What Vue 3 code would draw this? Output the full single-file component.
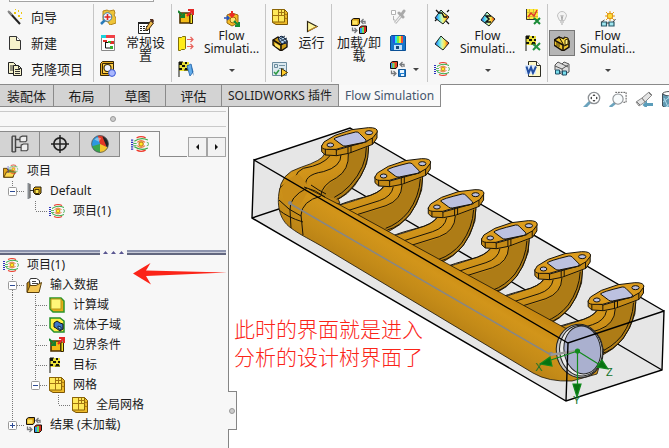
<script setup>
import { ref } from 'vue'

const projectActions = [
  { icon: 'wand', label: '向导' },
  { icon: 'page', label: '新建' },
  { icon: 'clone', label: '克隆项目' },
]

const groups = [
  [
    { kind: 'stack', items: [{ icon: 'inspect', label: '检查几何体' }, { icon: 'treeview', label: '项目树' }, { icon: 'units', label: '单位' }] },
    { kind: 'big', size: 'medium', icon: 'settings', text: '常规设\n置' },
  ],
  [
    { kind: 'stack', items: [{ icon: 'boundary', label: '边界条件' }, { icon: 'fan', label: '风扇' }, { icon: 'goalblue', label: '目标' }] },
    { kind: 'big', size: 'wide', icon: 'features', text: 'Flow\nSimulati...', menu: true },
  ],
  [
    { kind: 'stack', items: [{ icon: 'mesh', label: '网格' }, { icon: 'solid', label: '求解' }, { icon: 'batch', label: '批处理' }] },
    { kind: 'big', size: 'narrow', icon: 'play', text: '运行' },
  ],
  [
    { kind: 'big', size: 'large', icon: 'load', text: '加载/卸\n载' },
    { kind: 'stack', items: [{ icon: 'probe', label: '探测' }, { icon: 'save', label: '保存' }, { icon: 'loadsave', label: '加载时间', menu: true }] },
  ],
  [
    { kind: 'stack', items: [{ icon: 'cutplot', label: '切面图' }, { icon: 'surfplot', label: '表面图' }, { icon: 'flow', label: '流动迹线' }] },
    { kind: 'big', size: 'wide', icon: 'sigma', text: 'Flow\nSimulati...', menu: true },
    { kind: 'stack', items: [{ icon: 'chart', label: 'XY 图' }, { icon: 'goalxls', label: '目标图' }, { icon: 'word', label: '报告' }] },
  ],
  [
    { kind: 'stack', items: [{ icon: 'bulb', label: '照明' }, { icon: 'solidy', label: '显示几何体', on: true }, { icon: 'glasses', label: '透明度' }] },
    { kind: 'big', size: 'wide', icon: 'sunglasses', text: 'Flow\nSimulati...', menu: true },
  ],
]

const tabs = ['装配体', '布局', '草图', '评估', 'SOLIDWORKS 插件', 'Flow Simulation']
const activeTab = ref(5)

const panes = [
  { icon: 'feature', label: '特征树' },
  { icon: 'target', label: '尺寸' },
  { icon: 'ball', label: '外观' },
  { icon: 'flow', label: '流动分析' },
]
const activePane = ref(3)

const projectTree = [
  { cells: [], icon: 'flowfolder', label: '项目' },
  { cells: ['minus-top'], icon: 'config', label: 'Default' },
  { cells: ['blank', 'end'], icon: 'flow', label: '项目(1)' },
]
const analysisTree = [
  { cells: [], icon: 'flow', label: '项目(1)' },
  { cells: ['minus-both'], icon: 'folder', label: '输入数据' },
  { cells: ['line', 'tee'], icon: 'domain', label: '计算域' },
  { cells: ['line', 'tee'], icon: 'fluid', label: '流体子域' },
  { cells: ['line', 'tee'], icon: 'boundary', label: '边界条件' },
  { cells: ['line', 'tee'], icon: 'flag', label: '目标' },
  { cells: ['line', 'minus-top'], icon: 'mesh', label: '网格' },
  { cells: ['line', 'blank', 'end'], icon: 'mesh', label: '全局网格' },
  { cells: ['plus-top'], icon: 'load', label: '结果 (未加载)' },
]
const trees = [projectTree, analysisTree]

const viewTools = [
  { icon: 'zoomfit', label: '整屏显示' },
  { icon: 'zoomarea', label: '局部放大' },
  { icon: 'previous', label: '上一视图' },
  { icon: 'section', label: '剖面视图' },
]

const guidePath = {
  blank: '',
  line: 'M11.5 0V20',
  tee: 'M11.5 0V20M12 10.5H23',
  end: 'M11.5 0V10M12 10.5H23',
  'minus-top': 'M11.5 0V6M16 10.5H23',
  'minus-both': 'M11.5 0V6M11.5 15V20M16 10.5H23',
  'plus-top': 'M11.5 0V6M16 10.5H23',
}
const branches = [1, 2, 3, 4, 5]
</script>

<template>
  <svg class="sprite" aria-hidden="true">
    <defs>
      <linearGradient id="rainbow" x1="0" x2="1"><stop offset="0" stop-color="#2a48f0" /><stop offset=".28" stop-color="#4fdcf2" /><stop offset=".5" stop-color="#d4f7b4" /><stop offset=".7" stop-color="#ffe33d" /><stop offset="1" stop-color="#e2231a" /></linearGradient>
      <linearGradient id="pipe" gradientUnits="userSpaceOnUse" x1="440" y1="252" x2="405" y2="310"><stop offset="0" stop-color="#c4850f" /><stop offset=".3" stop-color="#d2951a" /><stop offset=".65" stop-color="#c48b18" /><stop offset="1" stop-color="#b27c14" /></linearGradient>
      <linearGradient id="elbow" x1="0" y1="0" x2=".4" y2="1"><stop offset="0" stop-color="#bd8216" /><stop offset=".45" stop-color="#d2951a" /><stop offset="1" stop-color="#ba8012" /></linearGradient>
    </defs>
    <symbol id="wand" viewBox="0 0 16 16"><path d="M2 3l11 12" stroke="#222" stroke-width="2" /><path d="M1 2l4 4" stroke="#888" stroke-width="2" /><path d="M7 3h2v2H7zM11 1h1v2h-1zM11 6h2v2h-2zM14 3h1v2h-1zM13 9h2v1h-2zM8 0h1v1H8z" fill="#edc811" /></symbol>
    <symbol id="page" viewBox="0 0 16 16"><path d="M2.500 1.500H9.500L13.500 5.500V14.500H2.500z" fill="#f6f2cb" stroke="#333" /><path d="M9.500 1.500V5.500H13.500" fill="#fff" stroke="#333" /></symbol>
    <symbol id="clone" viewBox="0 0 16 16"><path d="M1.500 1.500H6.500L9.500 4.500V12.500H1.500z" fill="#f6f2cb" stroke="#222" /><path d="M3 5h4M3 7h4M3 9h3" stroke="#333" /><path d="M6.500 4.500H11.500L14.500 7.500V14.500H6.500z" fill="#f6f2cb" stroke="#222" /><path d="M8 8.500h5M8 10.500h5M8 12.500h5M11.500 4.500v3h3" fill="none" stroke="#333" /></symbol>
    <symbol id="inspect" viewBox="0 0 16 16"><path d="M3 2l4-1 2 1 5-1 1 3-1 2 2 3v5l-6 2-2-3-5-2z" fill="#eec438" stroke="#b4851a" /><path d="M1 15l4-4" stroke="#287bbb" stroke-width="2.500" /><circle cx="7.500" cy="8" r="4.300" fill="#e9f5ff" stroke="#457ba0" /><path d="M7.500 5v6M4.500 8h6" stroke="#e32620" stroke-width="1.600" /></symbol>
    <symbol id="treeview" viewBox="0 0 16 16"><path d="M1.500 .5h13v15h-13z" fill="#fff" stroke="#888" /><path d="M1 0h14v3H1z" fill="#f13f45" /><path d="M1 0h5v3H1z" fill="#1bd2dc" /><path d="M5.500 6V13H11M5.500 7.500H8" fill="none" stroke="#111" /><path d="M3 5h4v2H3zM10 6h4v3h-4z" fill="#df302a" /><path d="M8 6h3v2H8zM10 11h3v3h-3z" fill="#36ae33" /></symbol>
    <symbol id="units" viewBox="0 0 16 16"><path d="M.5 2.500l2-2H13.500V12.500l-2 2H.5z" fill="#e6ac21" stroke="#352506" /><path d="M2.500 2.500h11v10h-11z" fill="#ffcf49" stroke="#352506" /><circle cx="7.500" cy="7" r="3.500" fill="#edf2ff" stroke="#463606" stroke-width="1.200" /><circle cx="12" cy="12" r="3.400" fill="#a9b7ff" stroke="#3b58d4" /></symbol>
    <symbol id="settings" viewBox="0 0 16 16"><path d="M.5 4.500h11v11h-11z" fill="#fff" stroke="#222" /><path d="M0 5h12" stroke="#222" stroke-width="2" /><path d="M2 8.500h8M2 10.500h8M2 12.500h8" stroke="#222" stroke-dasharray="2 1" /><path d="M12.500 3l3 2-5 6.500-3 1 1-3z" fill="#eebb4b" stroke="#402a10" /><path d="M12 1h3l1 2-1 2-3-3z" fill="#542d1c" /></symbol>
    <symbol id="boundary" viewBox="0 0 16 16"><path d="M2 4h10v10H2z" fill="#f2bb18" stroke="#4d3100" stroke-width="1.600" /><path d="M12 5h2.500v9.500H12z" fill="#fae526" stroke="#332300" /><path d="M0 2l6 6M2 8h4V4" fill="none" stroke="#16802d" stroke-width="2" /><path d="M9 7l5-5M10 1h5v5" fill="none" stroke="#e52725" stroke-width="2" /></symbol>
    <symbol id="fan" viewBox="0 0 16 16"><path d="M.5 2.500h3l1-1h3v12l-1 1h-3l-1 1h-2z" fill="#ffec1a" stroke="#817009" /><path d="M9 4.500h6M12.500 2l2.500 2.500L12.500 7M9 11.500h6M12.500 9l2.500 2.500-2.500 2.500" fill="none" stroke="#e8625c" stroke-width="1.200" /></symbol>
    <symbol id="flag" viewBox="0 0 16 16"><path d="M1 1h10v9H1z" fill="#ebe139" /><path d="M1 1h3v3H1zM7 1h2v2H7zM4 4h3v2H4zM9 4h2v2H9zM1 7h3v2H1zM7 7h3v2H7z" fill="#14160c" /><path d="M1 1v15M1 1h4M6 9h5" stroke="#14160c" /></symbol>
    <symbol id="goalblue" viewBox="0 0 16 16"><use href="#flag" /><path d="M9 5l4-2 2 8-3 4z" fill="#62adec" stroke="#3976b7" /><path d="M13 3l1 8 2 4z" fill="#276cae" /></symbol>
    <symbol id="features" viewBox="0 0 16 16"><path d="M3 4l5-2 6 2v8l-6 3-5-3z" fill="#f7bd25" stroke="#98690d" /><circle cx="9" cy="9" r="3" fill="#fce873" stroke="#9a6610" /><path d="M8 0v5M5.500 3L8 5.500 10.500 3" fill="none" stroke="#ed2b25" stroke-width="2" /><path d="M0 7h5M3 5l2 2-2 2" fill="none" stroke="#2451bd" stroke-width="1.500" /><path d="M10 10l5 5M11 15h4v-4" fill="none" stroke="#168d34" stroke-width="2" /></symbol>
    <symbol id="mesh" viewBox="0 0 16 16"><path d="M.5 .5h12l3 3v12H4l-3.500-2z" fill="#eebb2a" stroke="#7c5504" /><path d="M.5 .5h12v12.500H.5z" fill="#ffe95a" stroke="#8b6505" /><path d="M6.500 1v12M1 6.500h12M9.500 1v6M7 3.500h6M12.500 5l3 1M12.500 9l3 1" stroke="#a27412" /></symbol>
    <symbol id="solid" viewBox="0 0 16 16"><path d="M1 5l5-3 9 4v6l-6 4-8-6z" fill="#ce9d18" stroke="#171008" stroke-width="1.400" /><path d="M1 5l8 5v6M9 10l6-4" fill="none" stroke="#171008" stroke-width="1.500" /><path d="M6 4l3-3 5 3 1 4-5 1z" fill="#b9d7f6" stroke="#101d42" /><path d="M7 2l7 6M10 1l5 5M6 5l7-4M7 7l8-4M10 9l5-3" stroke="#23364a" /><path d="M3 8l5 3v3l-5-3z" fill="#ffe25d" /></symbol>
    <symbol id="solidy" viewBox="0 0 16 16"><path d="M0 5l5-3 10 4v6l-6 4-9-6z" fill="#ebc22d" stroke="#171008" stroke-width="1.500" /><path d="M0 5l9 5 6-4M9 10v6" fill="none" stroke="#171008" stroke-width="1.500" /><path d="M5 2l5 2V2l4 1 1 6-5 2-2-4z" fill="#ffdd45" stroke="#171008" /><path d="M11 5l3-1v5l-3 1zM3 7v4M5 8v4" fill="#ffef85" stroke="#413003" /></symbol>
    <symbol id="batch" viewBox="0 0 16 16"><path d="M.5 1.500h14v13H.5z" fill="#dce9ef" stroke="#6b8c9e" /><path d="M2.500 3.500h3v3h-3z" fill="none" stroke="#6b8c9e" /><path d="M2 11l2 2 3-4" fill="none" stroke="#2c9a42" stroke-width="1.500" /><path d="M7 4.500h6M7 7.500h5" stroke="#7594a5" /><path d="M9.500 7.500l6 4-6 4z" fill="#ffcc29" stroke="#3d2c08" /></symbol>
    <symbol id="play" viewBox="0 0 16 16"><path d="M3.500 3.500L13 8.500 3.500 13.500z" fill="#fff79e" stroke="#302815" stroke-width="1.200" /><path d="M4 13l9-4.500" stroke="#dc9821" /></symbol>
    <symbol id="load" viewBox="0 0 16 16"><path d="M.5 2L2.500 .5H8.500V5.500L7 7.500H.5z" fill="#d09b12" stroke="#171008" /><path d="M1.500 2.500h5v4h-5z" fill="#ffe663" /><path d="M8.500 9.500L10.500 8H15.500V13.500L13.500 15.500H8.500z" fill="#dd2d1b" stroke="#171008" /><path d="M9 10h2v5H9z" fill="#2d9bf0" /><path d="M11 9h2v6h-2z" fill="#65df69" /><path d="M10 3.500h4V6M12.500 1L10 3.500 12.500 6M5.500 12.500H1.500V9.500M3.500 10L6 12.500 3.500 15" fill="none" stroke="#77797c" stroke-width="1.300" /></symbol>
    <symbol id="probe" viewBox="0 0 16 16"><path d="M1.500 1.500h4v4h-4z" fill="#fff" stroke="#b3b3b3" /><path d="M3.500 7v4H5" fill="none" stroke="#b3b3b3" /><path d="M5 14l6-7" stroke="#c0c0c0" stroke-width="3" /><path d="M9 4l4 4M12 5l2-3" stroke="#aaa" stroke-width="3" stroke-linecap="round" /><path d="M5.500 13.500l5-6" stroke="#fff" /></symbol>
    <symbol id="save" viewBox="0 0 16 16"><path d="M.5 1.500l1-1h13l1 1v14H.5z" fill="#1877cb" stroke="#0a5096" /><path d="M3 1h2v7H3z" fill="#2451ea" /><path d="M5 1h2v7H5z" fill="#28e5ee" /><path d="M7 1h2v7H7z" fill="#75ed48" /><path d="M9 1h2v7H9z" fill="#f2ea31" /><path d="M11 1h2v7h-2z" fill="#f24c37" /><path d="M4 10h8v5H4z" fill="#c4e3fb" /><path d="M6 11h3v3H6z" fill="#164b7c" /></symbol>
    <symbol id="loadsave" viewBox="0 0 16 16"><path d="M.5 2L2.500 .5H7.500V5.500L6 7.500H.5z" fill="#e74825" stroke="#111" /><path d="M1 2h1.500v5H1z" fill="#358ef2" /><path d="M2.500 2h2v5h-2z" fill="#6de264" /><path d="M10 3.500h4V6M12.500 1L10 3.500 12.500 6M5.500 12.500H1.500V9.500M3.500 10L6 12.500 3.500 15" fill="none" stroke="#77797c" stroke-width="1.300" /><path d="M8.500 8.500h7v7h-7z" fill="#247fce" stroke="#155899" /><path d="M10 9h4v3h-4zM11 13h3v2h-3z" fill="#eaf6ff" /></symbol>
    <symbol id="surfplot" viewBox="0 0 16 16"><path d="M1 9l6-8 3 3 5 4-6 7-4-3z" fill="url(#rainbow)" stroke="#17231e" /></symbol>
    <symbol id="cutplot" viewBox="0 0 16 16"><use href="#surfplot" /><path d="M2 1l3 3h3l2 4h3M13 3l2-2M1 12l2-2M12 12l3 3" fill="none" stroke="#111" stroke-width="1.300" /></symbol>
    <symbol id="sigma" viewBox="0 0 16 16"><use href="#surfplot" /><path d="M11 5H6l3 3-3 3h5" fill="none" stroke="#111" stroke-width="1.500" /></symbol>
    <symbol id="flow" viewBox="0 0 16 16"><path d="M5 2.500q4-2 8 0M5 13.500q4 2 8 0" fill="none" stroke="#ee3b2c" stroke-width="1.200" /><path d="M3 5.500q6-4 12-1M3 10.500q6 4 12 1" fill="none" stroke="#3aaa45" /><path d="M5.500 6.500q3.500-3 7 0M5.500 9.500q3.500 3 7 0" fill="none" stroke="#ee7b3c" /><path d="M2 7.500h3M2 9.500h3M14 6.500l2 1M14 9.500l2-1" stroke="#3aaa45" stroke-width=".8" /><path d="M0 4.500h2M0 6.500h2M0 8.500h2M0 10.500h2M0 12.500h2" stroke="#2c30bc" /><circle cx="9" cy="8" r="1.900" fill="#ffed22" stroke="#c9821a" /></symbol>
    <symbol id="chart" viewBox="0 0 16 16"><path d="M1 0h12v11H1z" fill="#ffe93e" /><path d="M4.500 0v11M8.500 0v11M1 3.500h12M1 7.500h12" stroke="#d1bf32" /><path d="M1.500 0v10.500H12" fill="none" stroke="#333" /><path d="M3 8l3-4 3 3 3-6" fill="none" stroke="#e2342a" stroke-width="1.400" /><path d="M9 9l6 6M15 9l-6 6" stroke="#188a35" stroke-width="2" /></symbol>
    <symbol id="goalxls" viewBox="0 0 16 16"><use href="#flag" /><path d="M8 9l7 6M15 8l-7 7" stroke="#259241" stroke-width="2" /></symbol>
    <symbol id="word" viewBox="0 0 16 16"><path d="M3.500 .5h8l4 4v11h-12z" fill="#fff9c8" stroke="#2d2d24" /><path d="M11.500 .5v4h4" fill="#fff" stroke="#2d2d24" /><path d="M0 4h11v9H0z" fill="#dce9fa" /><path d="M1.500 5.500L3.500 12 6 6.500 8 12l3-6.500" fill="none" stroke="#2450a2" stroke-width="2" /></symbol>
    <symbol id="bulb" viewBox="0 0 16 16"><path d="M5.500 11.500L3.500 7a4.500 4.500 0 1 1 9 0l-2 4.500z" fill="#f3f3f3" stroke="#c2c2c2" /><path d="M6 13h4M7 15h2M7 6l1 5 1-5" fill="none" stroke="#aaa" /></symbol>
    <symbol id="glasses" viewBox="0 0 16 16"><path d="M1 4l3-3 4 2 2-2 5 2v8l-6 3-8-5z" fill="#ddd" stroke="#555" /><path d="M1 5l7 3 1 5M8 8l6-4M8 3l6 3" fill="none" stroke="#555" /><path d="M1.500 9h4v4h-4zM8.500 10h4v4h-4z" fill="#78ddeb" stroke="#214f67" /><path d="M5.500 11h3" stroke="#214f67" /></symbol>
    <symbol id="sunglasses" viewBox="0 0 16 16"><path d="M10 0v10M5 5h10M6 1l8 8M14 1L6 9" stroke="#e7a114" /><circle cx="10" cy="5" r="2.800" fill="#ffdd36" stroke="#da8c16" /><path d="M1.500 11h5v4h-5zM9 11h5v4H9z" fill="#9fe6ef" stroke="#2a5968" stroke-width="1.200" /><path d="M6.500 12H9M1.500 11l3-2M13 11l2.500-3" stroke="#444" /></symbol>
    <symbol id="feature" viewBox="0 0 16 16"><path d="M1 1h3v14M1 1v14M1 15h3M4 4h4M4 11h5" fill="none" stroke="#444" stroke-width="1.300" /><path d="M8 2l2-1h4v4l-1 1H8zM9 9l2-1h4v5l-1 1H9z" fill="#eee" stroke="#444" /></symbol>
    <symbol id="target" viewBox="0 0 16 16"><circle cx="8" cy="8" r="5.500" fill="none" stroke="#222" stroke-width="1.500" /><path d="M8 0v16M0 8h16" stroke="#222" stroke-width="1.300" /></symbol>
    <symbol id="ball" viewBox="0 0 16 16"><circle cx="8" cy="8" r="7.500" fill="#2c98de" /><path d="M8 8L6 .7A7.500 7.500 0 0 1 12 1.500L14 12z" fill="#e43826" /><path d="M10 1q5 1 5.500 7l-1 4z" fill="#232323" /><path d="M8 8L1 10A7.500 7.500 0 0 0 8 15.500z" fill="#39a64b" /><path d="M8 8v7.500A7.500 7.500 0 0 0 15 11z" fill="#f5c72c" /><path d="M3 4q3-3 6-1L7 6z" fill="#fff" opacity=".4" /><circle cx="8" cy="8" r="7.500" fill="none" stroke="#555" stroke-width=".7" /></symbol>
    <symbol id="folder" viewBox="0 0 16 16"><path d="M1 15V6l3-2v9z" fill="#c79019" stroke="#54390a" /><path d="M3.500 3.500l1-2h6l3 2V11h-9z" fill="#fff" stroke="#333" /><path d="M6 4.500h4M6 6.500h6" stroke="#444" /><path d="M1 15.500l3-7h6l5.500-3-2.500 10z" fill="#f4c653" stroke="#5b400d" /></symbol>
    <symbol id="flowfolder" viewBox="0 0 18 16"><path d="M.5 5h4l1 2h6v8H.5z" fill="#e5a61b" stroke="#563b0b" /><path d="M1 15l3-6h10l-3 6z" fill="#ffd94e" stroke="#563b0b" /><svg x="4" y="0" width="14" height="12"><use href="#flow" /></svg></symbol>
    <symbol id="config" viewBox="0 0 16 16"><path d="M2.500 0v16" stroke="#8b9095" stroke-width="2" /><path d="M4 1v14M4 7.500h3" stroke="#333" /><path d="M7.500 5.500L9 4h6v6l-1.500 1.500h-4l-2-2z" fill="#e1a90f" stroke="#211806" /><path d="M9 6.500h4v4H9z" fill="#ffe852" stroke="#463408" /></symbol>
    <symbol id="domain" viewBox="0 0 16 16"><path d="M1 1h11l3 3v11H4l-3-3z" fill="#e5ad17" stroke="#2c9529" stroke-width="1.500" /><path d="M2 2h10v10H2z" fill="#fff778" stroke="#b79919" /></symbol>
    <symbol id="fluid" viewBox="0 0 16 16"><path d="M1 1h10l4 3v11H5l-4-4z" fill="#fff145" stroke="#268f2a" stroke-width="1.500" /><path d="M5 6l3-2 3 2 3 1v5l-3 2-4-3-2-1z" fill="#3f78c8" stroke="#111" /><path d="M9 9l3 1v3l-3-2z" fill="#7cc2ff" stroke="#172c47" /></symbol>
    <symbol id="zoomfit" viewBox="0 0 18 18"><path d="M1 17l6-6" stroke="#6ba3bd" stroke-width="3" /><circle cx="11" cy="7" r="5.700" fill="#fff" stroke="#8d9195" stroke-width="1.300" /><path d="M11 3l1.500 2h-3zM11 11l1.500-2h-3zM7 7l2-1.500v3zM15 7l-2-1.500v3z" fill="#444" /></symbol>
    <symbol id="zoomarea" viewBox="0 0 20 18"><path d="M7 .5h12v11h-4" fill="none" stroke="#444" stroke-dasharray="2 1" /><path d="M1 17l6-5" stroke="#6ba3bd" stroke-width="3" /><circle cx="10" cy="8" r="5.700" fill="#f8fbfc" stroke="#8d9195" stroke-width="1.200" /></symbol>
    <symbol id="previous" viewBox="0 0 18 18"><path d="M1 11l6-4 3 4-6 4zM7 7l7-6 3 3-7 7z" fill="#e4e4e4" stroke="#8a8a8a" /><path d="M2 11l3 3M14 2l2 2" stroke="#777" /><path d="M18 12h-6V9.500L7.500 14l4.500 4v-3h6z" fill="#5b9dba" /></symbol>
    <symbol id="section" viewBox="0 0 18 18"><ellipse cx="8.500" cy="3" rx="7" ry="2.500" fill="#fff" stroke="#555" /><path d="M1.500 3v12q7 5 14 0V3q-7 4-14 0z" fill="#629ab2" stroke="#46505a" /><path d="M3 7l4 9M7 5l5 11M12 5l3 9M2 11l8-6M5 16l10-8" stroke="#b0dced" /></symbol>
  </svg>

  <div class="app">
    <div class="ribbon" role="toolbar" aria-label="Flow Simulation">
      <span class="ribbon-tooltip"></span>
      <div class="group actions">
        <button v-for="a in projectActions" :key="a.label" class="action">
          <svg class="icon"><use :href="'#' + a.icon" /></svg><span>{{ a.label }}</span>
        </button>
      </div>
      <div v-for="(group, g) in groups" :key="g" class="group">
        <template v-for="(part, p) in group" :key="p">
          <div v-if="part.kind === 'stack'" class="stack">
            <button v-for="item in part.items" :key="item.icon" class="small" :class="{ on: item.on, split: item.menu }" :aria-label="item.label">
              <svg class="icon"><use :href="'#' + item.icon" /></svg><i v-if="item.menu" class="caret"></i>
            </button>
          </div>
          <button v-else class="big" :class="[part.size, { menu: part.menu }]">
            <svg class="icon"><use :href="'#' + part.icon" /></svg>
            <span class="caption">{{ part.text }}</span>
            <i v-if="part.menu" class="caret"></i>
          </button>
        </template>
      </div>
    </div>

    <div class="tabbar">
      <nav class="tabs">
        <button v-for="(tab, i) in tabs" :key="tab" class="tab" :class="{ active: i === activeTab }" @click="activeTab = i">{{ tab }}</button>
      </nav>
      <div class="view-tools">
        <button v-for="tool in viewTools" :key="tool.icon" :aria-label="tool.label"><svg class="view-icon"><use :href="'#' + tool.icon" /></svg></button>
      </div>
    </div>

    <div class="workspace">
      <aside class="panel">
        <div class="grip"><i class="dot"></i></div>
        <div class="pane-bar">
          <button v-for="(pane, i) in panes" :key="pane.icon" class="pane" :class="{ active: i === activePane }" :aria-label="pane.label" @click="activePane = i">
            <svg class="pane-icon"><use :href="'#' + pane.icon" /></svg>
          </button>
          <span class="pane-fill"></span>
          <button class="scroll" aria-label="向左"><i class="left"></i></button>
          <button class="scroll" aria-label="向右"><i class="right"></i></button>
        </div>
        <template v-for="(tree, t) in trees" :key="t">
          <div v-if="t === 1" class="splitter"><i></i><svg class="ticks" viewBox="0 0 27 5"><path d="M3 4l2.500-3L8 4zM11 4l2.500-3L16 4zM19 4l2.500-3L24 4z" /></svg><i></i></div>
          <ul class="tree" :class="{ upper: t === 0 }">
            <li v-for="(row, r) in tree" :key="r" class="row">
              <svg v-for="(cell, c) in row.cells" :key="c" class="guide" viewBox="0 0 23 20">
                <path :d="guidePath[cell]" class="dots" />
                <g v-if="cell.startsWith('minus') || cell.startsWith('plus')">
                  <rect x="7.500" y="6.500" width="8" height="8" rx="1" class="expander" />
                  <path :d="cell.startsWith('plus') ? 'M9 10.500h5M11.500 8v5' : 'M9 10.500h5'" class="sign" />
                </g>
              </svg>
              <svg class="icon tree-icon"><use :href="'#' + row.icon" /></svg>
              <span>{{ row.label }}</span>
            </li>
          </ul>
        </template>
        <svg class="pointer" viewBox="0 0 94 22"><path d="M0 10.500L17.500 0 13 7.500 94 9.500 13 13 18 21.500z" /></svg>
      </aside>

      <main class="viewport">
        <svg class="model" viewBox="229 107 440 341" role="img" aria-label="歧管模型">
          <path d="M254 160L350 128 664 311 662 370 566 401 252 218z" fill="#e6e6e6" />
          <path d="M348 186L662 370M252 218L348 186M254 160L350 128 664 311" class="edge" />

          <g transform="translate(240 110) scale(.333333)">
            <path d="M253 132Q250 150 180 173Q120 190 118 250L150 300 300 280 295 268Q350 240 380 160L386 105z" class="elbow" />
            <path d="M325 130L386 110Q386 170 340 225Q315 260 290 268L245 258Q250 232 290 205Q330 180 325 130z" class="shade" />
            <path d="M303 134Q304 170 250 185Q185 195 200 235M325 130Q328 180 290 203Q245 225 242 258M270 137Q250 165 190 175Q150 195 180 228M379 112Q380 170 330 226Q305 252 283 262M386 110Q387 175 340 228Q315 258 290 268" class="seam" />
          </g>
          <g v-for="n in branches" :key="n" :transform="`translate(${240 + (n - 1) * 53.3} ${110 + (n - 1) * 31}) scale(.333333)`">
            <path d="M435 226Q420 250 370 263Q320 280 295 286L330 320 445 365Q520 330 545 240L548 195z" class="elbow" />
            <path d="M485 225L548 202Q546 260 510 310Q475 350 440 360L350 316L420 297Q490 275 485 225z" class="shade" />
            <path d="M430 230Q418 250 370 262Q320 275 295 286M460 230Q455 260 418 272L320 303M486 225Q485 270 438 287L354 313M541 206Q538 260 505 306Q475 342 437 355M548 202Q546 260 511 312Q480 350 442 360" class="seam" />
          </g>

          <path d="M280 188C276 203 279 220 291 228C300 235 310 239 328 250L533 373Q548 382 572 381L597 374 604 350 590 333 565 328 340 205 305 187Q290 175 280 188z" fill="url(#pipe)" stroke="#171208" stroke-width=".8" />
          <path d="M281 189Q285 178 299 174L310 188 300 205 285 203z" class="plain-elbow" />
          <path d="M307 188Q289 197 290 210L291 228M321 196Q302 201 301 215L303 235M279 200Q288 210 301 216M279 210Q287 217 303 222M304 187Q316 190 325 197M311 185Q318 190 326 194" class="seam page-seam" />
          <path d="M289 203L551 355 578 351" fill="none" stroke="#868686" stroke-width="1.500" />
          <circle cx="290" cy="203" r="2" fill="#888" /><circle cx="551" cy="354" r="2.200" fill="#888" />

          <g v-for="n in 6" :key="n" :transform="`translate(${240 + (n - 1) * 53.3} ${110 + (n - 1) * 31}) scale(.333333)`">
            <path d="M245 107V125L256 135 290 137 326 130 398 103 411 84V65L380 95 290 120z" class="flange-side" />
            <path d="M245 108L252 96 285 76 335 59 385 53Q414 52 412 66L399 83 374 97 323 108 288 118 259 118Q244 117 245 108z" class="flange" />
            <path d="M282 87Q285 81 347 66 354 65 358 70L378 90Q380 95 372 97L318 108Q310 109 306 105z" class="port" />
            <ellipse cx="271" cy="105" rx="10" ry="6" class="port" /><ellipse cx="387" cy="68" rx="11" ry="6" class="port" />
            <path d="M256 118V135M289 119V137M324 108V130M333 106V128M397 84V103" class="seam" />
          </g>

          <g transform="translate(450 250) scale(.333333)">
            <ellipse cx="389" cy="303" rx="70" ry="80" fill="#c6c6c6" class="ring" transform="rotate(-8 389 303)" />
            <ellipse cx="393" cy="302" rx="64" ry="76" fill="#ececec" class="ring" transform="rotate(-8 393 302)" />
            <ellipse cx="397" cy="300" rx="55" ry="72" fill="#aab0cf" class="ring" transform="rotate(-8 397 300)" />
            <path d="M302 314L383 303" fill="none" stroke="#999" stroke-width="7" />
          </g>
          <path d="M254 160L252 218 566 401 662 370 664 311 568 343zM568 343L566 401" class="edge" />
          <g class="triad">
            <path d="M577.500 351L548 361M577.500 351L600 365M577.500 351V386" />
            <path d="M540 364L550 357 552 366zM608 369L602 360 597 367zM577 397L573 384H581z" class="cone" />
            <circle cx="577.500" cy="351" r="2" />
          </g>
          <text x="535" y="371" class="axis">X</text><text x="606" y="376" class="axis">Z</text><text x="573" y="404" class="axis">Y</text>
        </svg>
        <p class="note">此时的界面就是进入<br />分析的设计树界面了</p>
        <div class="handle"><i class="dot"></i></div>
      </main>
    </div>
  </div>
</template>

<style>
body { margin: 0; background: #fff; }
</style>

<style scoped>
.app { display: flex; flex-direction: column; min-height: 100vh; overflow: hidden; color: #1c1c1c; font: 12px/20px "Noto Sans", "Noto Sans CJK SC", sans-serif; }
button { margin: 0; padding: 0; border: 0; background: none; color: inherit; font: inherit; }
.sprite { position: absolute; width: 0; height: 0; }
.icon { width: 16px; height: 16px; flex: none; }

.ribbon { position: relative; display: flex; padding: 4px 0 2px; background: #f7f7f7; }
.ribbon-tooltip { position: absolute; left: 9px; top: 0; width: 143px; height: 1px; border: 1px solid #a3a3a3; border-top: 0; background: #fff; }
.group { display: flex; flex: none; padding: 0 1px; border-right: 1px solid #c6c6c6; }
.group:last-child { border-right: 0; }
.actions { flex-direction: column; width: 91px; }
.action { display: flex; align-items: center; gap: 8px; height: 26px; padding-left: 6px; font-size: 13px; white-space: nowrap; }
.stack { display: flex; flex-direction: column; }
.small { display: flex; align-items: center; gap: 7px; width: 26px; height: 26px; padding: 0 5px; box-sizing: border-box; }
.small.split { width: 41px; }
.small.on { background: #b5b5b5; border: 1px solid #777; padding: 0 4px; }
.big { display: flex; flex-direction: column; align-items: center; padding-top: 14px; font-size: 13px; line-height: 13px; white-space: nowrap; }
.big .icon { margin-bottom: 2px; }
.big.menu { padding-top: 7px; font-size: 12px; }
.caption { white-space: pre; text-align: center; }
.wide { width: 65px; }
.large { width: 52px; }
.medium { width: 49px; }
.narrow { width: 37px; }
.caret { border: 3px solid transparent; border-top-color: #444; border-bottom: 0; }
.big .caret { margin-top: 14px; }

.tabbar { display: flex; height: 23px; }
.tabs { display: flex; flex: none; background: #f7f7f7; }
.tab { min-width: 56px; padding: 0 14px; box-sizing: border-box; border: solid #8a8a8a; border-width: 1px 1px 1px 0; background: #d3d3d3; font-size: 13px; white-space: nowrap; }
.tab:first-child { min-width: 0; padding: 0 7px; }
.tab:nth-child(n + 5) { padding: 0 6px; font-size: 12px; }
.tab.active { border-top-color: #f7f7f7; background: #f9f9f9; color: #45566d; }
.view-tools { display: flex; flex: 1; justify-content: flex-end; gap: 8px; margin-right: -10px; padding-top: 6px; border-top: 1px solid #8a8a8a; }
.view-icon { display: block; width: 18px; height: 18px; }

.workspace { display: flex; flex: 1; }
.panel { position: relative; flex: none; width: 228px; background: #f7f7f7; border-right: 1px solid #858585; }
.grip { display: flex; align-items: center; justify-content: center; height: 14px; margin: 4px 2px 4px 0; border: solid #c9c9c9; border-width: 1px 0; }
.dot { width: 4px; height: 4px; border: 1px solid #999; border-radius: 50%; background: #ccc; }
.pane-bar { display: flex; align-items: flex-end; height: 26px; margin-right: 2px; }
.pane { display: flex; align-items: center; justify-content: center; width: 40px; height: 26px; box-sizing: border-box; border: solid #8a8a8a; border-width: 1px 1px 1px 0; background: #d3d3d3; }
.pane.active { border-bottom-color: #f7f7f7; background: #f7f7f7; }
.pane-icon { width: 18px; height: 18px; }
.pane-fill { flex: 1; margin-right: 1px; border-bottom: 1px solid #8a8a8a; }
.scroll { display: flex; align-items: center; justify-content: center; width: 19px; height: 20px; box-sizing: border-box; border: 1px solid #a5a5a5; background: #f2f2f2; }
.scroll .left { border: 3px solid transparent; border-right-color: #111; border-left: 0; }
.scroll .right { border: 3px solid transparent; border-left-color: #111; border-right: 0; }

.tree { margin: 0; padding: 0 0 0 1px; list-style: none; }
.tree.upper { height: 89px; padding-top: 4px; }
.row { display: flex; align-items: center; height: 20px; white-space: nowrap; }
.guide { width: 23px; height: 20px; flex: none; }
.tree-icon { margin: 0 8px 0 2px; }
.dots { fill: none; stroke: #777; stroke-dasharray: 1 1; }
.expander { fill: #fff; stroke: #999; }
.sign { fill: none; stroke: #2d4b94; }
.splitter { display: flex; align-items: center; height: 5px; margin-right: 2px; }
.splitter i { flex: 1; height: 1px; border-top: 2px solid #8c93ad; border-bottom: 2px solid #62677f; background: #c8cbd8; }
.ticks { width: 27px; height: 5px; fill: #5a5791; }
.pointer { position: absolute; left: 133px; top: 156px; width: 94px; height: 22px; fill: #fb2418; }

.viewport { position: relative; flex: 1; min-width: 0; background: #fff; }
.model { display: block; width: 100%; }
.note { position: absolute; left: 5px; top: 208px; margin: 0; color: #fb2418; font-size: 21px; font-weight: 300; line-height: 28px; white-space: nowrap; }
.handle { position: absolute; left: -1px; top: 284px; display: flex; align-items: center; justify-content: center; width: 8px; height: 37px; border: 1px solid #858585; border-left: 0; background: #f7f7f7; }

.edge { fill: none; stroke: #000; stroke-width: 1.400; }
.elbow { fill: url(#elbow); stroke: #171208; stroke-width: 2.500; }
.plain-elbow { fill: #c98d18; }
.shade { fill: #ae7c16; }
.seam { fill: none; stroke: #171208; stroke-width: 3; }
.page-seam { stroke-width: 1; }
.flange-side { fill: #c58a16; stroke: #171208; stroke-width: 3; }
.flange { fill: #dc9c1e; stroke: #171208; stroke-width: 3; }
.port { fill: #bcc1e0; stroke: #171208; stroke-width: 3; }
.ring { stroke: #222; stroke-width: 3; }
.triad { fill: #118a1c; stroke: #118a1c; stroke-width: 1.200; }
.triad .cone { fill: #087211; }
.axis { fill: #13742a; font: 11px "Liberation Sans", sans-serif; }
</style>
